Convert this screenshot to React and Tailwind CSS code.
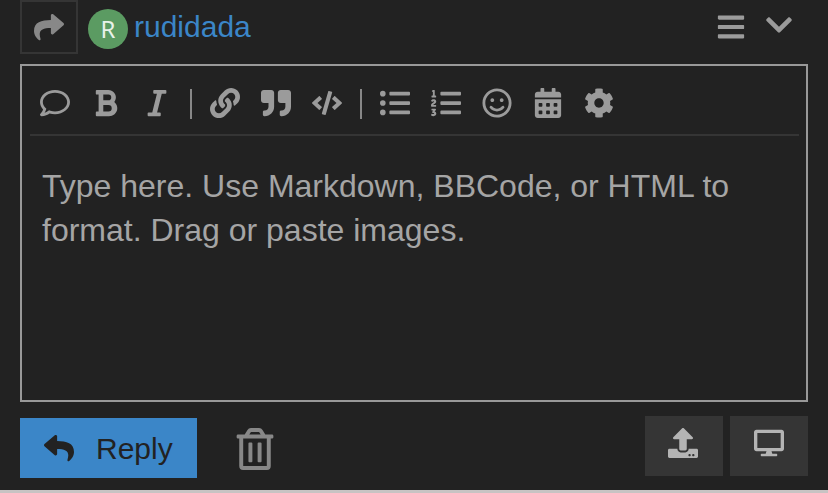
import { useState } from "react";
import {
  FaBars,
  FaBold,
  FaCalendarAlt,
  FaChevronDown,
  FaCode,
  FaCog,
  FaDesktop,
  FaItalic,
  FaLink,
  FaListOl,
  FaListUl,
  FaQuoteRight,
  FaRegComment,
  FaRegSmile,
  FaRegTrashAlt,
  FaReply,
  FaShare,
  FaUpload,
} from "react-icons/fa";

const toolbarGroups = [
  [
    { label: "Quote whole post", icon: FaRegComment },
    { label: "Bold", icon: FaBold },
    { label: "Italic", icon: FaItalic },
  ],
  [
    { label: "Hyperlink", icon: FaLink },
    { label: "Blockquote", icon: FaQuoteRight },
    { label: "Preformatted text", icon: FaCode },
  ],
  [
    { label: "Bulleted list", icon: FaListUl },
    { label: "Numbered list", icon: FaListOl },
    { label: "Emoji", icon: FaRegSmile },
    { label: "Insert date", icon: FaCalendarAlt },
    { label: "Options", icon: FaCog },
  ],
];

function IconButton({ label, icon: Icon, className, size = 30 }) {
  return (
    <button type="button" aria-label={label} className={`flex items-center justify-center ${className}`}>
      <Icon size={size} />
    </button>
  );
}

function Header() {
  return (
    <header className="flex items-start justify-between">
      <div className="flex items-center">
        <IconButton
          label="Reply options"
          icon={FaShare}
          className="h-[54px] w-[58px] border-2 border-[#353535] text-[#888888]"
        />
        <a href="#rudidada" className="ml-2.5 flex items-center gap-1.5 text-[30px] leading-9 text-[#3b86c8]">
          <span className="mt-1 flex size-10 items-center justify-center rounded-full bg-[#5b9b62] font-['Noto_Sans',sans-serif] text-2xl text-[#e8f2e9]">
            R
          </span>
          rudidada
        </a>
      </div>
      <div className="flex pr-[5px] text-[#9b9b9b]">
        <IconButton label="Toggle toolbar" icon={FaBars} className="h-[54px] w-12" />
        <IconButton label="Collapse" icon={FaChevronDown} className="h-[50px] w-12" />
      </div>
    </header>
  );
}

function Toolbar() {
  return (
    <div role="toolbar" className="ml-2 mr-[7px] flex border-b-2 border-[#353535] pt-[7px] text-[#9b9b9b]">
      {toolbarGroups.map((group, i) => (
        <div key={i} className="flex items-center">
          {i > 0 && <span className="mr-2 ml-[7px] h-[30px] w-0.5 bg-[#888888]" />}
          {group.map((item) => (
            <IconButton key={item.label} {...item} className="h-[61px] w-[51px] pr-0.5 pb-0.5" />
          ))}
        </div>
      ))}
    </div>
  );
}

export default function App() {
  const [text, setText] = useState("");

  return (
    <div className="border-b-3 border-[#c8c3c3] bg-[#222222] font-['Liberation_Sans',sans-serif]">
      <form className="px-5 pb-3" onSubmit={(e) => e.preventDefault()}>
        <Header />

        <div className="mt-2.5 border-2 border-[#999999]">
          <Toolbar />
          <textarea
            aria-label="Reply text"
            value={text}
            onChange={(e) => setText(e.target.value)}
            placeholder="Type here. Use Markdown, BBCode, or HTML to format. Drag or paste images."
            className="block h-[264px] w-full resize-none bg-transparent px-5 pt-7 text-[32px] leading-11 text-[#dddddd] outline-none placeholder:text-[#a5a5a5]"
          />
        </div>

        <div className="mt-3.5 flex items-start justify-between">
          <div className="mt-0.5 flex items-center gap-[37px]">
            <button
              type="submit"
              className="flex h-15 items-center gap-[22px] bg-[#3b86c8] px-6 text-[30px] text-[#222222]"
            >
              <FaReply size={30} />
              Reply
            </button>
            <IconButton label="Discard" icon={FaRegTrashAlt} size={42} className="h-15 pt-0.5 text-[#888888]" />
          </div>
          <div className="flex gap-[7px] text-[#b4b4b4]">
            <IconButton label="Upload" icon={FaUpload} className="h-15 w-[78px] bg-[#353535] pr-0.5 pb-1.5" />
            <IconButton label="Show preview" icon={FaDesktop} className="h-15 w-[78px] bg-[#353535] pb-1.5" />
          </div>
        </div>
      </form>
    </div>
  );
}
